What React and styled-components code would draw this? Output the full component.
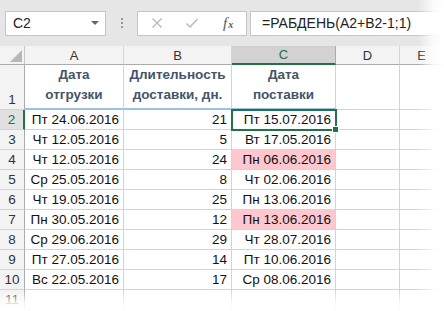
import React from 'react'
import styled, { createGlobalStyle } from 'styled-components'

const Global = createGlobalStyle`
  html, body { margin: 0; padding: 0; background: #fff; }
  body { width: 444px; height: 311px; overflow: hidden; }
`

const rows = [
  ['Пт 24.06.2016', 21, 'Пт 15.07.2016'],
  ['Чт 12.05.2016', 5, 'Вт 17.05.2016'],
  ['Чт 12.05.2016', 24, 'Пн 06.06.2016', true],
  ['Ср 25.05.2016', 8, 'Чт 02.06.2016'],
  ['Чт 19.05.2016', 25, 'Пн 13.06.2016'],
  ['Пн 30.05.2016', 12, 'Пн 13.06.2016', true],
  ['Ср 29.06.2016', 29, 'Чт 28.07.2016'],
  ['Пт 27.05.2016', 14, 'Пт 10.06.2016'],
  ['Вс 22.05.2016', 17, 'Ср 08.06.2016'],
]

const Sheet = styled.div`
  position: relative;
  width: 444px;
  height: 311px;
  overflow: hidden;
  font-family: "Liberation Sans", Arial, sans-serif;
  color: #111;
`

const Toolbar = styled.div`
  height: 46px;
  background: #e6e6e6;
  display: flex;
  align-items: center;
  padding: 0 0 0 5px;
  box-sizing: border-box;
`

const NameBox = styled.div`
  width: 101px;
  height: 25px;
  box-sizing: border-box;
  background: #fff;
  border: 1px solid #c6c6c6;
  display: flex;
  align-items: center;
  justify-content: space-between;
  padding: 0 6px 0 7px;
  font-size: 14px;
  color: #222;
`

const Caret = styled.span`
  width: 0;
  height: 0;
  border-left: 4px solid transparent;
  border-right: 4px solid transparent;
  border-top: 4px solid #666;
`

const Grip = styled.div`
  width: 2px;
  height: 13px;
  margin: 0 14px 0 15px;
  background: radial-gradient(circle, #9a9a9a 1px, transparent 1.2px) 0 0 / 2px 4px repeat-y;
`

const FxBox = styled.div`
  width: 110px;
  height: 25px;
  box-sizing: border-box;
  background: #fff;
  border: 1px solid #c6c6c6;
  display: flex;
  align-items: center;
  padding: 0 0 0 13px;
  gap: 22px;
`

const Fx = styled.span`
  font-family: "Liberation Serif", serif;
  font-style: italic;
  font-size: 15px;
  color: #555;
  margin-left: 2px;
  line-height: 1;
  display: inline-flex;
  align-items: baseline;
  span { font-size: 10px; margin-left: 1px; font-weight: bold; }
`

const Formula = styled.div`
  flex: 1;
  height: 25px;
  margin-left: 3px;
  box-sizing: border-box;
  background: #fff;
  border: 1px solid #c6c6c6;
  border-right: none;
  display: flex;
  align-items: center;
  padding-left: 11px;
  font-size: 14px;
  color: #222;
`

const Grid = styled.div`
  display: grid;
  grid-template-columns: 25px 99px 108px 104px 64px 1fr;
  grid-template-rows: 19px 45px repeat(10, 20px);
`

const Corner = styled.div`
  background: #f3f3f3;
  border-right: 1px solid #c8c8c8;
  border-bottom: 1px solid #ababab;
  position: relative;
  &::after {
    content: '';
    position: absolute;
    right: 2px;
    bottom: 2px;
    border-left: 12px solid transparent;
    border-bottom: 12px solid #b8b8b8;
  }
`

const ColHead = styled.div`
  background: ${p => (p.$active ? '#d2d2d2' : '#f3f3f3')};
  color: ${p => (p.$active ? '#217346' : '#333')};
  border-right: 1px solid ${p => (p.$active ? '#ababab' : '#d4d4d4')};
  border-bottom: ${p => (p.$active ? '2px solid #217346' : '1px solid #ababab')};
  font-size: 13px;
  display: flex;
  align-items: center;
  justify-content: center;
  box-sizing: border-box;
`

const RowHead = styled.div`
  background: ${p => (p.$active ? '#e1e1e1' : '#f3f3f3')};
  color: ${p => (p.$active ? '#217346' : '#333')};
  border-right: ${p => (p.$active ? '2px solid #217346' : '1px solid #ababab')};
  border-bottom: 1px solid #d4d4d4;
  font-size: 13.5px;
  display: flex;
  align-items: flex-end;
  justify-content: center;
  padding-bottom: 2px;
  box-sizing: border-box;
`

const Cell = styled.div`
  position: relative;
  border-right: 1px solid #d4d4d4;
  border-bottom: 1px solid ${p => (p.$blue ? '#9bc2e6' : '#d4d4d4')};
  border-bottom-width: ${p => (p.$blue ? '2px' : '1px')};
  background: ${p => (p.$red ? '#ffc7ce' : '#fff')};
  font-size: 13.5px;
  display: flex;
  align-items: flex-end;
  justify-content: ${p => (p.$center ? 'center' : 'flex-end')};
  padding: 0 4px 2px;
  box-sizing: border-box;
  white-space: nowrap;
  ${p => p.$sel && `
    outline: 2px solid #217346;
    outline-offset: -1px;
    z-index: 1;
    &::after {
      content: '';
      position: absolute;
      right: -4px;
      bottom: -4px;
      width: 5px;
      height: 5px;
      background: #217346;
      border: 1px solid #fff;
    }
  `}
`

const Title = styled.div`
  color: #44546a;
  font-weight: bold;
  font-size: 13.5px;
  line-height: 20px;
  text-align: center;
  padding-bottom: 1px;
`

const FadeRight = styled.div`
  position: absolute;
  top: 0;
  right: 0;
  width: 26px;
  height: 100%;
  background: linear-gradient(to right, rgba(255,255,255,0), rgba(255,255,255,0.85) 60%, #fff);
  z-index: 5;
`

const FadeBottom = styled.div`
  position: absolute;
  left: 0;
  bottom: 0;
  width: 100%;
  height: 20px;
  background: linear-gradient(to bottom, rgba(255,255,255,0), rgba(255,255,255,0.8) 55%, #fff);
  z-index: 5;
`

export default function App() {
  return (
    <Sheet>
      <Global />
      <Toolbar>
        <NameBox>C2<Caret /></NameBox>
        <Grip />
        <FxBox>
          <svg width="12" height="12" viewBox="0 0 12 12">
            <path d="M1.5 1.5 L10.5 10.5 M10.5 1.5 L1.5 10.5" stroke="#b8b8b8" strokeWidth="1.3" fill="none" />
          </svg>
          <svg width="14" height="12" viewBox="0 0 14 12">
            <path d="M1.5 6.5 L5 10 L12.5 2" stroke="#b8b8b8" strokeWidth="1.5" fill="none" />
          </svg>
          <Fx>f<span>x</span></Fx>
        </FxBox>
        <Formula>=РАБДЕНЬ(A2+B2-1;1)</Formula>
      </Toolbar>
      <Grid>
        <Corner />
        <ColHead>A</ColHead>
        <ColHead>B</ColHead>
        <ColHead $active>C</ColHead>
        <ColHead>D</ColHead>
        <ColHead>E</ColHead>

        <RowHead>1</RowHead>
        <Cell $center $blue><Title>Дата<br />отгрузки</Title></Cell>
        <Cell $center $blue><Title>Длительность<br />доставки, дн.</Title></Cell>
        <Cell $center $blue><Title>Дата<br />поставки</Title></Cell>
        <Cell />
        <Cell />

        {rows.map((r, i) => (
          <React.Fragment key={i}>
            <RowHead $active={i === 0}>{i + 2}</RowHead>
            <Cell>{r[0]}</Cell>
            <Cell>{r[1]}</Cell>
            <Cell $red={r[3]} $sel={i === 0}>{r[2]}</Cell>
            <Cell />
            <Cell />
          </React.Fragment>
        ))}
        <RowHead>11</RowHead>
        <Cell />
        <Cell />
        <Cell />
        <Cell />
        <Cell />
      </Grid>
      <FadeRight />
      <FadeBottom />
    </Sheet>
  )
}
